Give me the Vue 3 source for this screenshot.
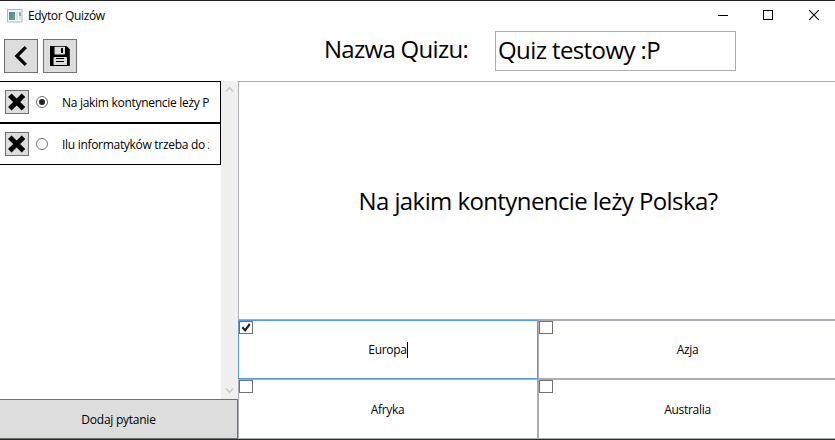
<script setup>
import { ref } from 'vue'

const quizName = ref('Quiz testowy :P')
const selected = ref(0)
const questions = [
  { id: 0, text: 'Na jakim kontynencie leży Polska?', tracking: 'list-a' },
  { id: 1, text: 'Ilu informatyków trzeba do zmiany żarówki?', tracking: 'list-b' },
]
const answers = [
  { text: 'Europa', checked: true },
  { text: 'Azja', checked: false },
  { text: 'Afryka', checked: false },
  { text: 'Australia', checked: false },
]
</script>

<template>
  <div class="window">
    <header class="titlebar">
      <svg class="app-icon" width="16" height="14" viewBox="0 0 16 14">
        <defs>
          <linearGradient id="pane" x1="0" y1="0" x2="1" y2="1">
            <stop offset="0" stop-color="#4a7fae" />
            <stop offset="1" stop-color="#5fae84" />
          </linearGradient>
        </defs>
        <rect x="0.5" y="0.5" width="14.5" height="12.5" fill="#f4f5f7" stroke="#b3b8bd" />
        <rect x="2" y="3" width="6" height="8" fill="url(#pane)" />
        <rect x="9" y="3" width="2" height="8" fill="#dfe1e4" />
        <rect x="12" y="3" width="2" height="4" fill="#82b9a2" />
        <rect x="12" y="7" width="2" height="4" fill="#dfe1e4" />
      </svg>
      <span class="app-title">Edytor Quizów</span>
      <div class="controls">
        <svg width="46" height="29" viewBox="0 0 46 29" shape-rendering="crispEdges"><path d="M18 14.5h10" stroke="#000" /></svg>
        <svg width="46" height="29" viewBox="0 0 46 29" shape-rendering="crispEdges"><rect x="17.5" y="9.5" width="9" height="9" fill="none" stroke="#000" /></svg>
        <svg width="46" height="29" viewBox="0 0 46 29"><path d="M17.2 9.2l9.6 9.6M26.8 9.2l-9.6 9.6" stroke="#000" stroke-width="1.1" /></svg>
      </div>
    </header>

    <div class="toolbar">
      <button class="tool">
        <svg width="32" height="32" viewBox="0 0 32 32"><path d="M20.800 7.200L11.800 16l9 8.800" fill="none" stroke="#000" stroke-width="3.2" /></svg>
      </button>
      <button class="tool">
        <svg width="32" height="32" viewBox="0 0 32 32">
          <path d="M6 6h16.500l3.300 3.300V26H6z" fill="#000" />
          <path d="M10.500 6.700h10.500v7q0 .8-.8.8h-8.900q-.8 0-.8-.8z" fill="#ddd" />
          <path d="M17 8h2v5h-2z" fill="#000" />
          <path d="M10.500 17h11.500q1 0 1 1v7H9.500v-7q0-1 1-1z" fill="#ddd" />
          <path d="M12 18.500h8M12 21.500h8" stroke="#000" stroke-width="1" />
        </svg>
      </button>
      <span class="name-label">Nazwa Quizu:</span>
      <div class="name-box">{{ quizName }}</div>
    </div>

    <main class="body">
      <aside class="side">
        <div class="list-area">
          <div class="list">
            <div v-for="q in questions" :key="q.id" class="item">
              <button class="remove">
                <svg width="22" height="22" viewBox="0 0 22 22"><path d="M3.800 4.200L17.500 17.800M17.500 4.200L3.800 17.800" stroke="#000" stroke-width="5" /></svg>
              </button>
              <span class="radio" :class="{ on: selected === q.id }" @click="selected = q.id"></span>
              <span class="item-text" :class="q.tracking">{{ q.text }}</span>
            </div>
          </div>
          <div class="scroll">
            <svg width="17" height="17" viewBox="0 0 17 17"><path d="M5 10.500l3.500-3.800 3.500 3.800" fill="none" stroke="#cbcbcb" stroke-width="1.500" /></svg>
            <svg width="17" height="17" viewBox="0 0 17 17"><path d="M5 6.500l3.500 3.800 3.500-3.800" fill="none" stroke="#cbcbcb" stroke-width="1.500" /></svg>
          </div>
        </div>
        <button class="add"><span>Dodaj pytanie</span></button>
      </aside>

      <section class="editor">
        <div class="question"><span>Na jakim kontynencie leży Polska?</span></div>
        <div class="answers">
          <div v-for="(a, i) in answers" :key="a.text" class="answer" :class="{ focused: i === 0 }">
            <span class="check">
              <svg v-if="a.checked" width="12" height="11" viewBox="0 0 12 11"><path d="M2.300 5.300l2.800 3L9.800 2" fill="none" stroke="#212121" stroke-width="2.100" /></svg>
            </span>
            <span class="answer-text">{{ a.text }}<i v-if="i === 0" class="caret"></i></span>
          </div>
        </div>
      </section>
    </main>
  </div>
</template>

<style>
body { margin: 0; overflow: hidden; }
</style>

<style scoped>
* { box-sizing: border-box; }
.window {
  width: 835px;
  height: 440px;
  display: flex;
  flex-direction: column;
  overflow: hidden;
  background: #fff;
  border-top: 1px solid #222;
  border-bottom: 1px solid #2b2b33;
  color: #000;
  font: 12px/16px "Segoe UI", "Open Sans", "Noto Sans", sans-serif;
}
button {
  padding: 0;
  font: inherit;
  color: inherit;
  background: #ddd;
  border: 1px solid #707070;
  border-radius: 0;
  display: flex;
  align-items: center;
  justify-content: center;
}
svg { display: block; flex: none; }
.titlebar {
  height: 29px;
  flex: none;
  display: flex;
  align-items: center;
  padding-left: 7px;
}
.app-title { margin-left: 5px; padding-top: 1px; letter-spacing: -0.36px; }
.controls { display: flex; margin-left: auto; margin-right: -3px; }
.toolbar {
  height: 51px;
  flex: none;
  display: flex;
  align-items: flex-start;
  padding: 1px 0 0 4px;
}
.tool { width: 34px; height: 34px; margin: 8px 5px 0 0; }
.name-label {
  width: 171px;
  margin-left: 242px;
  padding-top: 1px;
  font-size: 24px;
  line-height: 34px;
  white-space: nowrap;
  letter-spacing: -0.7px;
}
.name-box {
  width: 241px;
  height: 40px;
  border: 1px solid #abadb3;
  padding-left: 2px;
  font-size: 24px;
  line-height: 36px;
  white-space: nowrap;
  letter-spacing: -0.6px;
}
.body { flex: 1; min-height: 0; display: flex; }
.side { width: 238px; flex: none; display: flex; flex-direction: column; }
.list-area { flex: 1; display: flex; }
.list { width: 221px; }
.item {
  height: 42px;
  border: solid #000;
  border-width: 1px 1px 1px 0;
  display: flex;
  align-items: center;
  padding-left: 5px;
}
.remove { width: 24px; height: 24px; }
.radio {
  width: 12px;
  height: 12px;
  margin-left: 7px;
  border: 1px solid #707070;
  border-radius: 50%;
  display: flex;
  align-items: center;
  justify-content: center;
}
.radio.on::after { content: ""; width: 6px; height: 6px; border-radius: 50%; background: #212121; }
.item-text {
  width: 147px;
  margin-left: 14px;
  padding-top: 2px;
  overflow: hidden;
  white-space: nowrap;
}
.list-a { letter-spacing: -0.29px; }
.list-b { letter-spacing: -0.3px; }
.scroll {
  width: 17px;
  background: #f0f0f0;
  display: flex;
  flex-direction: column;
  justify-content: space-between;
}
.add { height: 40px; width: 238px; border-left: 0; letter-spacing: -0.25px; }
.add span { padding-top: 2px; }
.editor { width: 600px; flex: none; display: flex; flex-direction: column; }
.question {
  height: 239px;
  border: 1px solid #abadb3;
  display: flex;
  align-items: center;
  justify-content: center;
  font-size: 24px;
  line-height: 32px;
  letter-spacing: -0.59px;
  white-space: nowrap;
}
.answers {
  flex: 1;
  display: grid;
  grid-template-columns: 300px 300px;
  grid-template-rows: 59px 60px;
}
.answer { border: 1px solid #abadb3; display: flex; align-items: center; }
.answer.focused { border-color: #569de5; }
.check {
  width: 14px;
  height: 13px;
  border: 1px solid #707070;
  align-self: flex-start;
  flex: none;
}
.answer-text { flex: 1; margin-right: 15px; padding-top: 1px; text-align: center; letter-spacing: -0.3px; }
.caret {
  display: inline-block;
  width: 1px;
  height: 16px;
  margin-right: -1px;
  background: #000;
  vertical-align: top;
}
</style>
